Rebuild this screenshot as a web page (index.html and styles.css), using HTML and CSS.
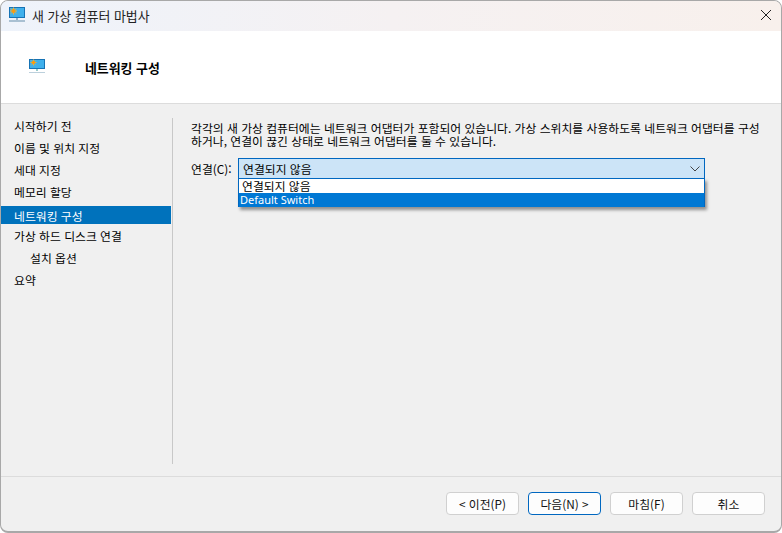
FILE: index.html
```html
<!DOCTYPE html>
<html lang="ko">
<head>
<meta charset="utf-8">
<title>새 가상 컴퓨터 마법사</title>
<link rel="stylesheet" href="styles.css">
</head>
<body>
<div class="window">
  <div class="titlebar">
    <svg class="title-icon" width="16" height="16" viewBox="0 0 16 16"><rect x="0" y="0" width="16" height="11" fill="#1673b5"/><rect x="1" y="1" width="14" height="9" fill="#3fb0ec"/><path d="M4.500 0.500V7.500M1 4H8M2 1.500L7 6.500M7 1.500L2 6.500" stroke="#f3b33a" stroke-width="1"/><circle cx="4.500" cy="4" r="2" fill="#f59c12"/><rect x="7" y="11" width="2" height="2" fill="#8fb0c8"/><rect x="0" y="13" width="16" height="2" fill="#a9c0d2"/></svg>
    <span class="title-text">새 가상 컴퓨터 마법사</span>
    <svg class="close" width="10" height="10" viewBox="0 0 10 10"><path d="M0 0L10 10M10 0L0 10" stroke="#222" stroke-width="1" fill="none"/></svg>
  </div>
  <div class="header">
    <svg class="header-icon" width="16" height="16" viewBox="0 0 16 16"><rect x="0" y="0" width="16" height="10" fill="#1673b5"/><rect x="1" y="1" width="14" height="8" fill="#3fb0ec"/><path d="M4.500 0.500V6.500M1.500 3.500H7.500M2.500 1.500L6.500 5.500M6.500 1.500L2.500 5.500" stroke="#f3b33a" stroke-width="1"/><circle cx="4.500" cy="3.500" r="1.800" fill="#f59c12"/><rect x="7" y="10" width="2" height="2" fill="#9cc"/><rect x="0" y="13" width="16" height="1" fill="#bcd0dc"/></svg>
    <h1 class="header-title">네트워킹 구성</h1>
  </div>
  <div class="body">
    <nav class="nav">
      <div class="nav-list">
        <div class="nav-item">시작하기 전</div>
        <div class="nav-item">이름 및 위치 지정</div>
        <div class="nav-item">세대 지정</div>
        <div class="nav-item">메모리 할당</div>
        <div class="nav-item selected">네트워킹 구성</div>
        <div class="nav-item">가상 하드 디스크 연결</div>
        <div class="nav-item sub">설치 옵션</div>
        <div class="nav-item">요약</div>
      </div>
    </nav>
    <main class="content">
      <p class="desc">각각의 새 가상 컴퓨터에는 네트워크 어댑터가 포함되어 있습니다. 가상 스위치를 사용하도록 네트워크 어댑터를 구성<br>하거나, 연결이 끊긴 상태로 네트워크 어댑터를 둘 수 있습니다.</p>
      <div class="field">
        <label class="field-label">연결(C):</label>
        <div class="combo">
          <div class="combo-box">
            <span>연결되지 않음</span>
            <svg width="10" height="6" viewBox="0 0 10 6"><path d="M0.500 0.500L5 5L9.500 0.500" stroke="#444" stroke-width="1" fill="none"/></svg>
          </div>
          <div class="combo-list">
            <div class="combo-opt">연결되지 않음</div>
            <div class="combo-opt active">Default Switch</div>
          </div>
        </div>
      </div>
    </main>
  </div>
  <div class="footer">
    <button class="btn">&lt; 이전(P)</button>
    <button class="btn primary">다음(N) &gt;</button>
    <button class="btn">마침(F)</button>
    <button class="btn">취소</button>
  </div>
</div>
</body>
</html>
```
FILE: styles.css
```css
* { box-sizing: border-box; }
html, body { margin: 0; height: 100%; background: #fff; }
body { font-family: "Noto Sans CJK KR", "Noto Sans", sans-serif; font-size: 11.840px; color: #000; }
.window { width: 782px; height: 533px; display: flex; flex-direction: column; background: #f0f0f0; border: 1px solid #a8a8a8; border-bottom-width: 2px; border-radius: 8px; overflow: hidden; }
.titlebar { height: 30px; flex: none; display: flex; align-items: center; padding: 0 10px 2px 8px; background: linear-gradient(90deg, #eef3fb, #f5f1f2 50%, #f8f0ec); }
.title-icon { flex: none; }
.title-text { margin-left: 7px; font-size: 12.900px; color: #222; }
.close { margin-left: auto; }
.header { height: 73px; flex: none; display: flex; align-items: center; background: #fff; padding-left: 28px; border-bottom: 1px solid #dcdcdc; }
.header-title { margin: 0 0 0 40px; font-size: 12.900px; font-weight: 700; color: #000; }
.body { flex: 1; display: flex; min-height: 0; }
.nav { width: 172px; flex: none; margin: 14px 0 12px; border-right: 1px solid #c8c8c8; }
.nav-list { margin-top: -4px; }
.nav-item { height: 22px; display: flex; align-items: center; padding-left: 13px; }
.nav-item.sub { padding-left: 29px; }
.nav-item.selected { background: #0072bc; color: #fff; height: 18px; margin: 4px 1px 0 0; }
.content { flex: 1; padding: 17px 16px 0 18px; min-width: 0; }
.desc { margin: 0; line-height: 13px; white-space: nowrap; }
.field { display: flex; align-items: center; margin-top: 11px; }
.field-label { width: 47px; flex: none; }
.combo { position: relative; width: 467px; }
.combo-box { height: 20px; display: flex; align-items: center; justify-content: space-between; padding: 0 4px; background: #cce4f7; border: 1px solid #0067c0; border-bottom: 0; }
.combo-list { position: absolute; left: 0; right: 0; top: 20px; border: 1px solid #0067c0; background: #fff; border-bottom-width: 0; box-shadow: 2px 3px 3px rgba(0, 0, 0, .4); }
.combo-opt { height: 14px; line-height: 13px; padding-left: 3px; }
.combo-opt.active { background: #0078d4; color: #fff; font-family: "Noto Sans", sans-serif; font-size: 11px; padding-left: 1px; }
.footer { height: 55px; flex: none; display: flex; justify-content: flex-end; gap: 9px; padding: 15px 16px 0 0; border-top: 1px solid #dcdcdc; }
.btn { width: 73px; height: 23px; padding: 0; font: inherit; color: #111; background: #fdfdfd; border: 1px solid #d0d0d0; border-radius: 4px; }
.btn.primary { border-color: #0067c0; }
```
